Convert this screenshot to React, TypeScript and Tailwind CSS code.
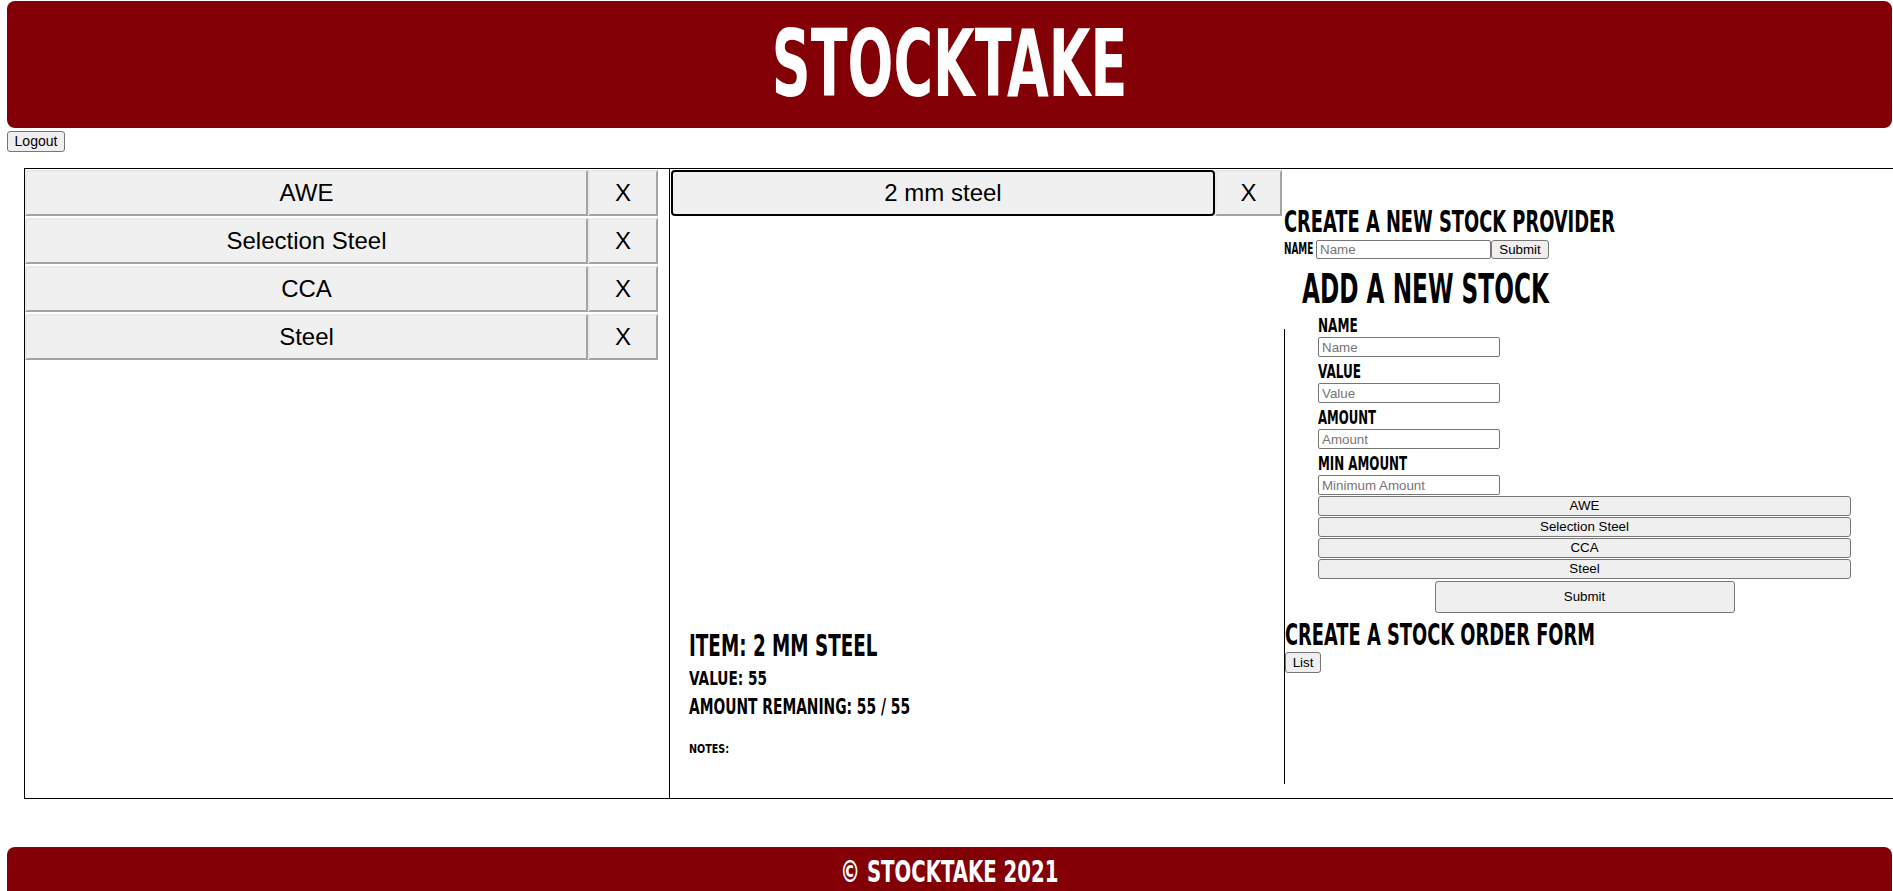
import React from 'react';

const narrow = "font-['Liberation_Sans_Narrow','DejaVu_Sans_Condensed',sans-serif] font-bold uppercase";
const arial = "font-['Liberation_Sans',Arial,sans-serif]";
const btn = `${arial} bg-[#efefef] border border-[#767676] rounded-[3px] text-[13.33px] text-black leading-none`;
const field = `${arial} block border border-[#767676] rounded-[2px] px-[3px] text-[13.33px] text-black placeholder:text-[#757575] outline-none`;
const outset =
  'border-2 border-t-[#e9e9e9] border-l-[#e9e9e9] border-r-[#a3a3a3] border-b-[#a3a3a3] bg-[#f0f0f0] text-[24px] text-black';

function Cond({ children, className = '', sx }: { children: React.ReactNode; className?: string; sx: string }) {
  return (
    <div className={`${narrow} whitespace-nowrap text-black ${className}`}>
      <span className={`inline-block origin-left ${sx}`}>{children}</span>
    </div>
  );
}

const providers = ['AWE', 'Selection Steel', 'CCA', 'Steel'];

function ProviderList() {
  return (
    <div className="flex w-[645px] shrink-0 flex-col border-r border-black pt-px">
      {providers.map((p) => (
        <div key={p} className="mb-[2px] flex h-[46px]">
          <button className={`${arial} ${outset} w-[563px]`}>{p}</button>
          <button className={`${arial} ${outset} w-[70px]`}>X</button>
        </div>
      ))}
    </div>
  );
}

function StockDetail() {
  return (
    <div className="flex w-[614px] shrink-0 flex-col pt-px">
      <div className="ml-px flex h-[46px]">
        <button className={`${arial} w-[544px] rounded-[4px] border-2 border-black bg-[#f0f0f0] text-[24px] text-black`}>
          2 mm steel
        </button>
        <button className={`${arial} ${outset} w-[67px]`}>X</button>
      </div>
      <div className="mt-[412px] pl-[19px]">
        <Cond className="text-[30px] leading-[36px]" sx="scale-x-[0.68]">
          Item: 2 mm steel
        </Cond>
        <Cond className="mt-[1px] text-[20px] leading-[27px]" sx="scale-x-[0.76]">
          Value: 55
        </Cond>
        <Cond className="mt-[2px] text-[20.5px] leading-[27px]" sx="scale-x-[0.75]">
          Amount remaning: 55 / 55
        </Cond>
        <Cond className="mt-[20px] text-[13px] leading-[16px]" sx="scale-x-[0.82]">
          Notes:
        </Cond>
      </div>
    </div>
  );
}

function Field({ label, placeholder, sx }: { label: string; placeholder: string; sx: string }) {
  return (
    <div className="mb-[3px]">
      <Cond className="h-[23px] text-[20px] leading-[23px]" sx={sx}>
        {label}
      </Cond>
      <input placeholder={placeholder} className={`${field} h-[20px] w-[182px]`} />
    </div>
  );
}

function Forms() {
  return (
    <div className="flex grow flex-col pt-[34px]">
      <Cond className="text-[31px] leading-[36px]" sx="scale-x-[0.64]">
        Create a new stock provider
      </Cond>
      <div className="mt-px flex h-[19px] items-center">
        <div className={`${narrow} w-[32px] shrink-0 whitespace-nowrap text-[15px] leading-[19px] text-black`}>
          <span className="inline-block origin-left scale-x-[0.66]">Name</span>
        </div>
        <input placeholder="Name" className={`${field} h-[19px] w-[175px]`} />
        <button className={`${btn} h-[19px] w-[58px] px-[6px]`}>Submit</button>
      </div>
      <Cond className="ml-[18px] mt-[7px] text-[40px] leading-[46px]" sx="scale-x-[0.645]">
        Add a new stock
      </Cond>
      <div className="mt-[2px] flex">
        <div className="mt-[15px] h-[455px] w-px shrink-0 bg-black" />
        <div className="flex flex-col">
          <div className="ml-[33px]">
            <Field label="Name" placeholder="Name" sx="scale-x-[0.67]" />
            <Field label="Value" placeholder="Value" sx="scale-x-[0.67]" />
            <Field label="Amount" placeholder="Amount" sx="scale-x-[0.65]" />
            <Field label="Min amount" placeholder="Minimum Amount" sx="scale-x-[0.66]" />
            <div className="-mt-[2px] flex w-[533px] flex-col">
              {providers.map((p) => (
                <button key={p} className={`${btn} mb-px h-[20px] w-full`}>
                  {p}
                </button>
              ))}
              <button className={`${btn} mx-auto mt-px h-[32px] w-[300px]`}>Submit</button>
            </div>
          </div>
          <Cond className="mt-[3px] text-[31px] leading-[36px]" sx="scale-x-[0.64]">
            Create a stock order form
          </Cond>
          <button className={`${btn} h-[21px] w-[36px] px-[6px]`}>List</button>
        </div>
      </div>
    </div>
  );
}

export default function App() {
  return (
    <div className="h-[891px] w-[1893px] overflow-hidden bg-white">
      <header className="ml-[7px] mt-px flex h-[127px] w-[1885px] items-center justify-center rounded-lg bg-[#830006]">
        <span className={`${narrow} inline-block scale-x-[0.645] text-[93px] leading-none text-white`}>Stocktake</span>
      </header>
      <button className={`${btn} ml-[7px] mt-[2px] h-[21px] w-[58px] text-[14px]`}>Logout</button>
      <div className="ml-[24px] mt-[16px] flex h-[631px] w-[1900px] border border-black">
        <ProviderList />
        <StockDetail />
        <Forms />
      </div>
      <footer className="ml-[7px] mt-[48px] h-[60px] w-[1885px] rounded-t-lg bg-[#830006] pt-[7px] text-center">
        <span className={`${narrow} inline-block scale-x-[0.73] text-[30px] leading-[36px] text-white`}>© Stocktake 2021</span>
      </footer>
    </div>
  );
}
